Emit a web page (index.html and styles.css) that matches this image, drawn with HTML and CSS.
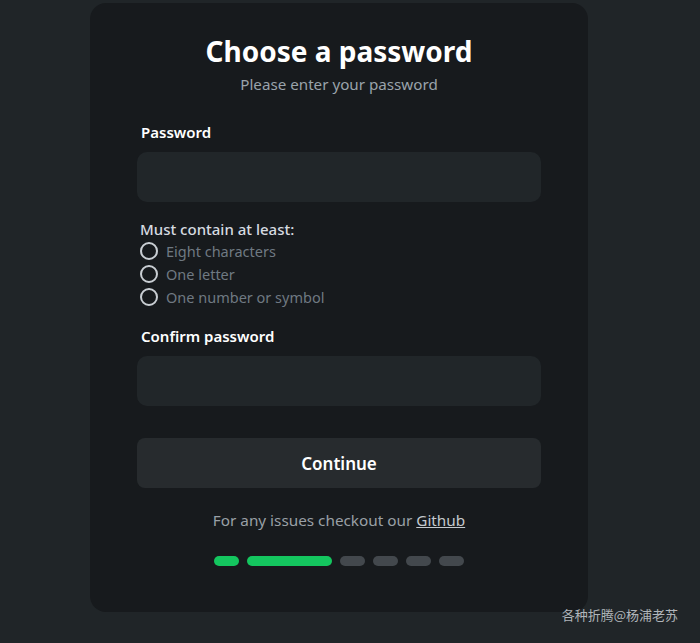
FILE: index.html
```html
<!DOCTYPE html>
<html lang="en">
<head>
<meta charset="utf-8">
<title>Choose a password</title>
<link rel="stylesheet" href="styles.css">
</head>
<body>
<div class="page">
  <main class="card">
    <h1 class="title">Choose a password</h1>
    <p class="subtitle">Please enter your password</p>

    <label class="label">Password</label>
    <div class="input"></div>

    <div class="rules">
      <div class="rules-head">Must contain at least:</div>
      <div class="rule"><span class="circle"></span>Eight characters</div>
      <div class="rule"><span class="circle"></span>One letter</div>
      <div class="rule"><span class="circle"></span>One number or symbol</div>
    </div>

    <label class="label">Confirm password</label>
    <div class="input"></div>

    <button class="btn">Continue</button>

    <p class="footer">For any issues checkout our <a class="link">Github</a></p>

    <div class="steps">
      <span class="step done"></span>
      <span class="step done wide"></span>
      <span class="step"></span>
      <span class="step"></span>
      <span class="step"></span>
      <span class="step"></span>
    </div>
  </main>
  <div class="watermark">各种折腾@杨浦老苏</div>
</div>
</body>
</html>
```
FILE: styles.css
```css
* { box-sizing: border-box; }
html, body {
  margin: 0;
  padding: 0;
  background: #202528;
  font-family: "Noto Sans", "Open Sans", "Noto Sans CJK SC", sans-serif;
}
.page {
  position: relative;
  width: 700px;
  height: 643px;
  padding-top: 3px;
  padding-left: 90px;
}
.card {
  width: 498px;
  height: 609px;
  background: #171a1d;
  border-radius: 16px;
  padding: 30px 47px 0;
  display: flex;
  flex-direction: column;
}
.title {
  margin: 0;
  text-align: center;
  color: #ffffff;
  font-size: 28px;
  font-weight: 700;
  line-height: 36px;
}
.subtitle {
  margin: 0;
  margin-top: 4px;
  text-align: center;
  color: #9aa3ab;
  font-size: 15.2px;
  line-height: 22px;
}
.label {
  display: block;
  margin-top: 27px;
  padding-left: 4px;
  color: #ffffff;
  font-size: 15px;
  font-weight: 600;
  line-height: 20px;
}
.input {
  margin-top: 10px;
  height: 50px;
  background: #212629;
  border-radius: 10px;
}
.rules {
  margin-top: 16px;
  padding-left: 3px;
}
.rules-head {
  color: #d6dbe0;
  font-size: 15px;
  font-weight: 500;
  line-height: 22px;
}
.rule {
  display: flex;
  align-items: center;
  gap: 8px;
  color: #6f7982;
  font-size: 14.5px;
  line-height: 22.8px;
}
.circle {
  width: 18px;
  height: 18px;
  border: 2px solid #c9ced3;
  border-radius: 50%;
}
.rules + .label { margin-top: 18px; }
.btn {
  margin-top: 32px;
  height: 50px;
  border: none;
  border-radius: 8px;
  background: #272b2e;
  color: #ffffff;
  font-family: inherit;
  font-size: 17px;
  font-weight: 600;
}
.footer {
  margin: 21px 0 0;
  text-align: center;
  color: #9aa0a6;
  font-size: 15.3px;
  line-height: 22px;
}
.link {
  color: #c4c9ce;
  text-decoration: underline;
}
.steps {
  margin-top: 25px;
  display: flex;
  justify-content: center;
  gap: 8px;
}
.step {
  width: 25px;
  height: 10px;
  border-radius: 5px;
  background: #43484d;
}
.step.done { background: #14c65f; }
.step.wide { width: 85px; }
.watermark {
  position: absolute;
  right: 22px;
  bottom: 19px;
  color: #b0b5ba;
  font-size: 13px;
  font-family: "Noto Sans CJK SC", sans-serif;
}
```
